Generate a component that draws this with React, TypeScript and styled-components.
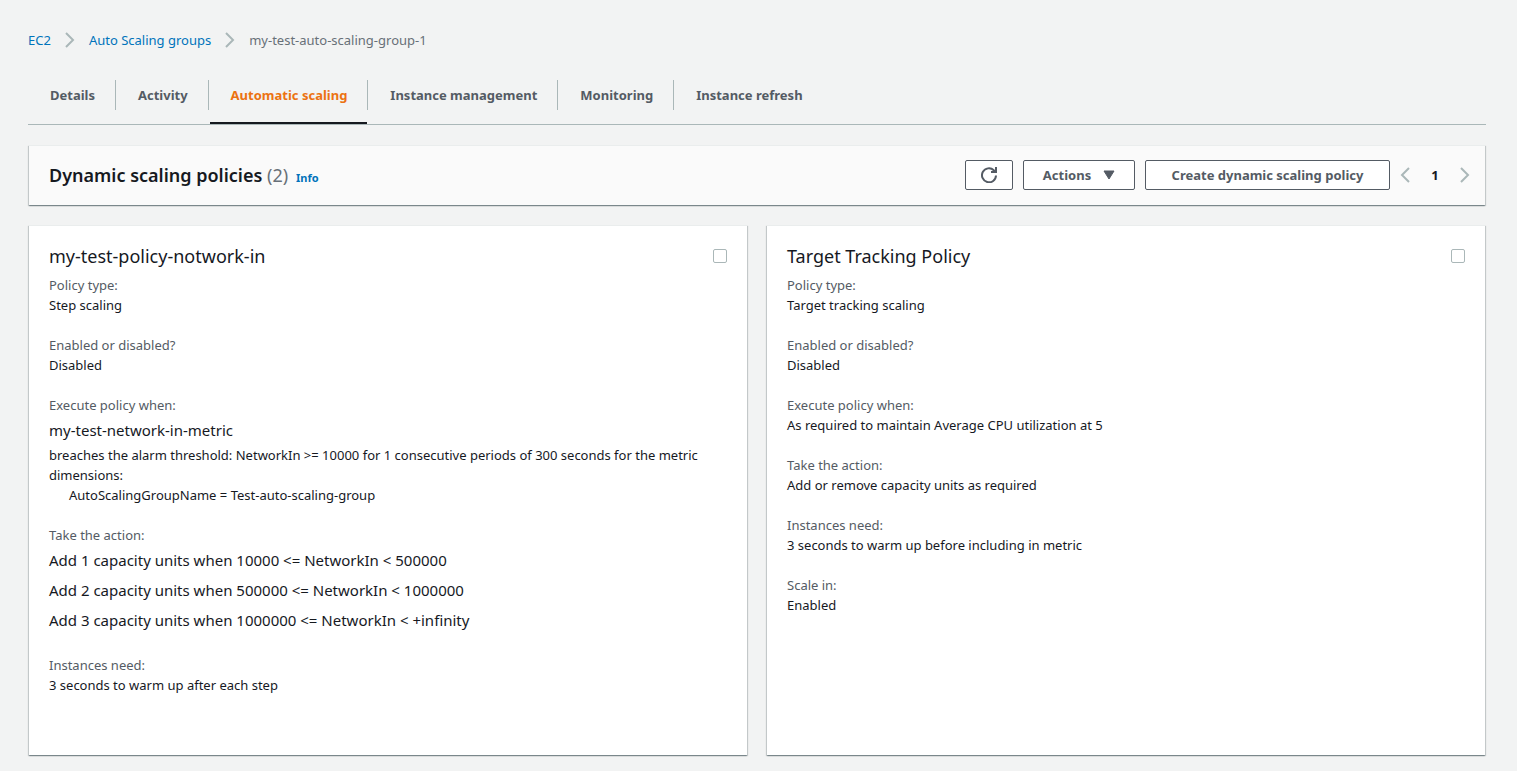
import React, { useState } from 'react';
import styled, { createGlobalStyle } from 'styled-components';

const GlobalStyle = createGlobalStyle`
  *, *::before, *::after { box-sizing: border-box; }
  body {
    margin: 0;
    background: #f2f3f3;
    color: #16191f;
    font-family: 'Noto Sans', 'Open Sans', sans-serif;
    font-size: 13px;
    line-height: 20px;
  }
  h1, h2, p, ol, ul, dl, dd { margin: 0; padding: 0; }
  ol, ul { list-style: none; }
  button { font-family: inherit; cursor: pointer; }
`;

const Page = styled.main`
  padding: 30px 31px 15px 28px;
`;

const Breadcrumbs = styled.ol`
  display: flex;
  align-items: center;
  height: 20px;
`;

const Crumb = styled.li`
  display: flex;
  align-items: center;
  color: #687078;
`;

const CrumbLink = styled.a`
  color: #0073bb;
  text-decoration: none;
  &:hover { text-decoration: underline; }
`;

const CrumbArrow = styled.svg`
  width: 10px;
  height: 16px;
  margin: 0 14px;
`;

const TabList = styled.div`
  display: flex;
  margin-top: 30px;
  border-bottom: 1px solid #aab7b8;
`;

const Divider = styled.span`
  flex: none;
  width: 1px;
  height: 30px;
  background: #aab7b8;
`;

const Tab = styled.button<{ $active: boolean }>`
  height: 44px;
  padding: 0 20px 12px 21px;
  border: 0;
  border-bottom: 2px solid ${(p) => (p.$active ? '#16191f' : 'transparent')};
  margin-left: 1px;
  background: none;
  color: ${(p) => (p.$active ? '#ec7211' : '#545b64')};
  font-size: 13px;
  font-weight: 700;
  line-height: 20px;
  white-space: nowrap;
`;

const Panel = styled.section`
  border-top: 1px solid #eaeded;
  background: #fff;
  box-shadow:
    0 1px 1px 0 rgba(0, 28, 36, 0.3),
    1px 1px 1px 0 rgba(0, 28, 36, 0.15),
    -1px 1px 1px 0 rgba(0, 28, 36, 0.15);
`;

const HeaderPanel = styled(Panel)`
  display: flex;
  align-items: center;
  justify-content: space-between;
  margin: 20px 1px 0;
  padding: 14px 15px 15px 20px;
  background: #fafafa;
`;

const Heading = styled.div`
  display: flex;
  align-items: baseline;
`;

const HeadingText = styled.h1`
  font-size: 18px;
  font-weight: 600;
  line-height: 30px;
`;

const Count = styled.span`
  color: #687078;
  font-weight: 400;
`;

const InfoLink = styled.a`
  margin-left: 8px;
  color: #0073bb;
  font-size: 11px;
  font-weight: 700;
  text-decoration: none;
`;

const Toolbar = styled.div`
  display: flex;
  align-items: center;
  gap: 10px;
`;

const Button = styled.button<{ $width: number }>`
  display: flex;
  align-items: center;
  justify-content: center;
  gap: 12px;
  width: ${(p) => p.$width}px;
  height: 30px;
  padding: 0;
  border: 1px solid #545b64;
  border-radius: 2px;
  background: #fff;
  color: #545b64;
  font-size: 13px;
  font-weight: 700;
  line-height: 20px;
  white-space: nowrap;
`;

const Pagination = styled.nav`
  display: flex;
  align-items: center;
`;

const PageArrow = styled.button`
  display: flex;
  align-items: center;
  justify-content: center;
  width: 10px;
  height: 30px;
  padding: 0;
  border: 0;
  background: none;
`;

const PageNumber = styled.button`
  width: 50px;
  height: 30px;
  padding: 0;
  border: 0;
  background: none;
  color: #16191f;
  font-size: 13px;
  font-weight: 700;
`;

const Cards = styled.div`
  display: grid;
  grid-template-columns: 1fr 1fr;
  gap: 20px;
  margin: 20px 1px 0;
`;

const Card = styled(Panel)`
  padding: 15px 20px 60px;
`;

const CardHeader = styled.label`
  display: flex;
  align-items: center;
  justify-content: space-between;
  margin-bottom: 4px;
`;

const CardTitle = styled.h2`
  font-size: 18px;
  font-weight: 400;
  line-height: 30px;
`;

const Checkbox = styled.input`
  appearance: none;
  width: 14px;
  height: 14px;
  margin: 0;
  border: 1px solid #aab7b8;
  border-radius: 2px;
  background: #fff;
  &:checked { border-color: #0073bb; background: #0073bb; }
`;

const Fields = styled.dl`
  display: grid;
  gap: 20px;
`;

const Term = styled.dt`
  color: #545b64;
`;

const Line = styled.p`
  font-size: 15px;
  line-height: 30px;
`;

const Dimension = styled.p`
  padding-left: 20px;
`;

const Field = ({ label, children }: { label: string; children: React.ReactNode }) => (
  <div>
    <Term>{label}</Term>
    <dd>{children}</dd>
  </div>
);

const Separator = () => (
  <CrumbArrow viewBox="0 0 10 16" fill="none" stroke="#aab7b8" strokeWidth="2" aria-hidden="true">
    <path d="M1 1l7 7-7 7" />
  </CrumbArrow>
);

const Chevron = ({ left }: { left?: boolean }) => (
  <svg width="10" height="16" viewBox="0 0 10 16" fill="none" stroke="#aab7b8" strokeWidth="2" aria-hidden="true">
    <path d={left ? 'M9 1L2 8l7 7' : 'M1 1l7 7-7 7'} />
  </svg>
);

const RefreshIcon = () => (
  <svg width="16" height="16" viewBox="0 0 16 16" fill="none" stroke="#545b64" strokeWidth="2" aria-hidden="true">
    <path d="M15 8.5A7 7 0 1 1 12.8 3.2L14.6 4.8" />
    <path d="M15 0v5H10" />
  </svg>
);

const tabs = ['Details', 'Activity', 'Automatic scaling', 'Instance management', 'Monitoring', 'Instance refresh'];

export default function App() {
  const [active, setActive] = useState('Automatic scaling');
  return (
    <>
      <GlobalStyle />
      <Page>
        <nav aria-label="Breadcrumbs">
          <Breadcrumbs>
            <Crumb><CrumbLink href="#ec2">EC2</CrumbLink><Separator /></Crumb>
            <Crumb><CrumbLink href="#groups">Auto Scaling groups</CrumbLink><Separator /></Crumb>
            <Crumb aria-current="page">my-test-auto-scaling-group-1</Crumb>
          </Breadcrumbs>
        </nav>

        <TabList role="tablist">
          {tabs.map((name, i) => (
            <React.Fragment key={name}>
              {i > 0 && <Divider />}
              <Tab role="tab" aria-selected={name === active} $active={name === active} onClick={() => setActive(name)}>
                {name}
              </Tab>
            </React.Fragment>
          ))}
        </TabList>

        <HeaderPanel>
          <Heading>
            <HeadingText>Dynamic scaling policies <Count>(2)</Count></HeadingText>
            <InfoLink href="#info">Info</InfoLink>
          </Heading>
          <Toolbar>
            <Button $width={48} aria-label="Refresh"><RefreshIcon /></Button>
            <Button $width={112}>
              Actions
              <svg width="12" height="10" viewBox="0 0 12 10" fill="#545b64" aria-hidden="true">
                <path d="M1 1h10L6 9z" stroke="#545b64" strokeLinejoin="round" />
              </svg>
            </Button>
            <Button $width={245}>Create dynamic scaling policy</Button>
            <Pagination aria-label="Pages">
              <PageArrow aria-label="Previous page"><Chevron left /></PageArrow>
              <PageNumber>1</PageNumber>
              <PageArrow aria-label="Next page"><Chevron /></PageArrow>
            </Pagination>
          </Toolbar>
        </HeaderPanel>

        <Cards>
          <Card>
            <CardHeader>
              <CardTitle>my-test-policy-notwork-in</CardTitle>
              <Checkbox type="checkbox" />
            </CardHeader>
            <Fields>
              <Field label="Policy type:">Step scaling</Field>
              <Field label="Enabled or disabled?">Disabled</Field>
              <Field label="Execute policy when:">
                <Line>my-test-network-in-metric</Line>
                <p>
                  breaches the alarm threshold: NetworkIn &gt;= 10000 for 1 consecutive periods of 300 seconds for the
                  metric dimensions:
                </p>
                <Dimension>AutoScalingGroupName = Test-auto-scaling-group</Dimension>
              </Field>
              <Field label="Take the action:">
                <Line>Add 1 capacity units when 10000 &lt;= NetworkIn &lt; 500000</Line>
                <Line>Add 2 capacity units when 500000 &lt;= NetworkIn &lt; 1000000</Line>
                <Line>Add 3 capacity units when 1000000 &lt;= NetworkIn &lt; +infinity</Line>
              </Field>
              <Field label="Instances need:">3 seconds to warm up after each step</Field>
            </Fields>
          </Card>
          <Card>
            <CardHeader>
              <CardTitle>Target Tracking Policy</CardTitle>
              <Checkbox type="checkbox" />
            </CardHeader>
            <Fields>
              <Field label="Policy type:">Target tracking scaling</Field>
              <Field label="Enabled or disabled?">Disabled</Field>
              <Field label="Execute policy when:">As required to maintain Average CPU utilization at 5</Field>
              <Field label="Take the action:">Add or remove capacity units as required</Field>
              <Field label="Instances need:">3 seconds to warm up before including in metric</Field>
              <Field label="Scale in:">Enabled</Field>
            </Fields>
          </Card>
        </Cards>
      </Page>
    </>
  );
}
